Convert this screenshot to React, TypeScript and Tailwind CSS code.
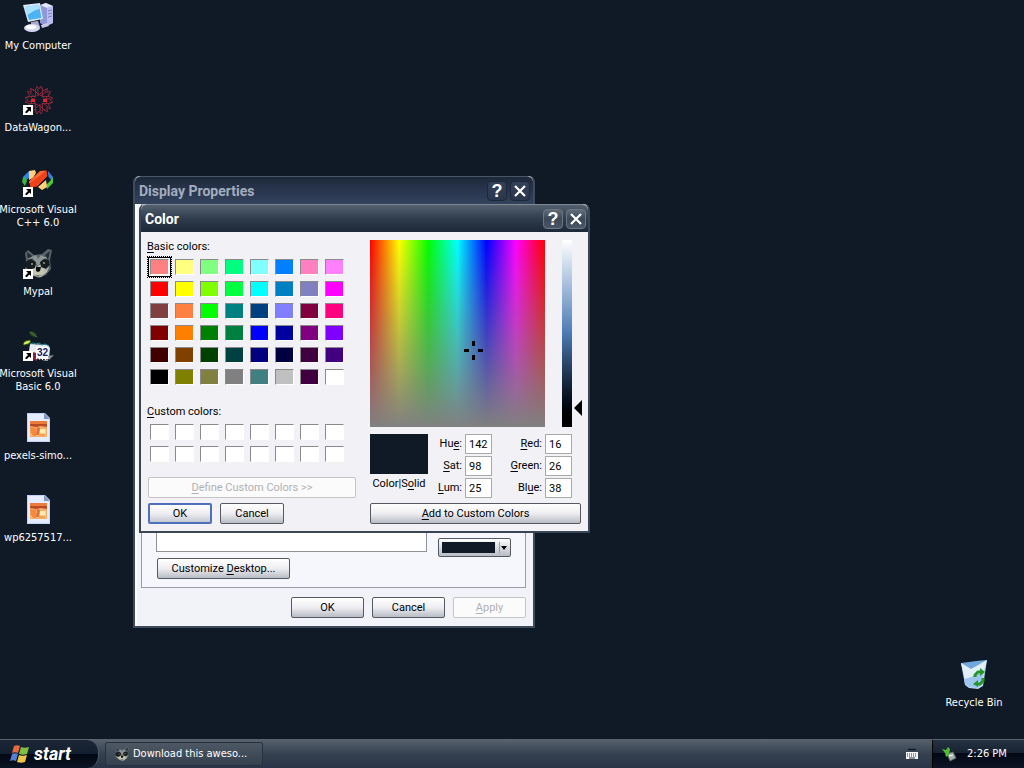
import { useState } from "react";
import type { ReactNode } from "react";

const BASIC_COLORS = [
  "#ff8080", "#ffff80", "#80ff80", "#00ff80", "#80ffff", "#0080ff", "#ff80c0", "#ff80ff",
  "#ff0000", "#ffff00", "#80ff00", "#00ff40", "#00ffff", "#0080c0", "#8080c0", "#ff00ff",
  "#804040", "#ff8040", "#00ff00", "#008080", "#004080", "#8080ff", "#800040", "#ff0080",
  "#800000", "#ff8000", "#008000", "#008040", "#0000ff", "#0000a0", "#800080", "#8000ff",
  "#400000", "#804000", "#004000", "#004040", "#000080", "#000040", "#400040", "#400080",
  "#000000", "#808000", "#808040", "#808080", "#408080", "#c0c0c0", "#400040", "#ffffff",
];
const CUSTOM_COLORS = Array.from({ length: 16 }, () => "#ffffff");

const UI_FONT = "font-['Roboto','Liberation_Sans',sans-serif]";
const SHELL_FONT = "font-['DejaVu_Sans_Condensed','DejaVu_Sans',sans-serif]";

function Shortcut() {
  return (
    <g>
      <path d="M1 21h10v10H1z" fill="#fff" />
      <path d="M4 23h5v5l-1.700-1.500L5 29H3.500v-1.500L6 25z" fill="#000" />
    </g>
  );
}

function ComputerIcon() {
  return (
    <svg viewBox="0 0 32 32" className="size-8">
      <path d="M18 4l5-3 8 3v17l-8 3-5-3z" fill="#8f97d4" />
      <path d="M18 3l6-2 7 3-6 2z" fill="#e4e8fb" />
      <path d="M25 6l6-2v17l-6 3z" fill="#b8bcee" />
      <path d="M26 9l4-1M26 12l4-1M26 15l4-1" stroke="#7a80c4" />
      <path d="M1 3l17-2 3 16-15 3z" fill="#dbe8fa" />
      <path d="M3 5l14-2 2.500 13L7 18z" fill="#4cb3f5" />
      <path d="M3 5l14-2 .5 4C12 8 9 11 5.500 13z" fill="#a9e2ff" />
      <path d="M9 20l7-1 2 6H9z" fill="#a5aacd" />
      <ellipse cx="10" cy="26" rx="8" ry="4" fill="#d5d8f2" />
      <ellipse cx="9" cy="25" rx="5" ry="2" fill="#fff" />
      <path d="M19 23l6-2 2 3-7 2z" fill="#c8c9e8" />
    </svg>
  );
}

function WagonIcon() {
  return (
    <svg viewBox="0 0 32 32" className="size-8">
      <g fill="none" stroke="#86283a">
        {[0, 45, 90, 135, 180, 225, 270, 315].map((deg) => (
          <g key={deg} transform={`rotate(${deg} 17 16)`}>
            <path d="M17 11l-4-4 2-5 2 3 2-3 2 5z" />
            <path d="M13 7l-3-2M20 12l4-5" />
          </g>
        ))}
      </g>
      <circle cx="17" cy="16" r="5" fill="none" stroke="#a32b40" strokeDasharray="2 1" />
      <path d="M9 15h4v3H9zM21 15h4v3h-4z" fill="#e0243c" />
      <Shortcut />
    </svg>
  );
}

function VisualCIcon() {
  return (
    <svg viewBox="0 0 32 32" className="size-8">
      <path d="M7 5l-6 6 2 4 5-4z" fill="#2f86e8" />
      <path d="M1 11l-1 5 3 4 2-5-2-4z" fill="#36b53c" />
      <path d="M26 5l5 6-1 4-4-5z" fill="#2f86e8" />
      <path d="M31 11v6l-6 6-1-4 5-5z" fill="#4dc63c" />
      <path d="M7 5l6-1 1 3-3 5-4 2z" fill="#ffd27a" />
      <path d="M24 14l1 7-5 3-4-3z" fill="#ffd27a" />
      <path d="M18 5l7-1 1 6-11 11-7 1-1-6z" fill="#ee4318" stroke="#2a0c08" />
      <path d="M18 5l6-.5-6 5-11 8v-2z" fill="#fc6a3a" />
      <Shortcut />
    </svg>
  );
}

function RaccoonFace() {
  return (
    <g>
      <path d="M3 5l3-3 6 5 8-1 6-5 4 1-2 10 1 9-5 6-7 3-8-3-6-7 1-8z" fill="#59636a" />
      <path d="M5 4l5 4-4 5zM28 3l-5 4 3 5z" fill="#222b32" />
      <path d="M10 9l4-2 2 4 3-4 4 3-4 4-3 4-3-4z" fill="#8c9596" />
      <path d="M3 17l7-1 5 3 4-3 9-1-3 9-6 5-7-1-6-5z" fill="#c3c5b0" />
      <path d="M3 14l6-3 5 3-1 6-6 2-4-3zM27 12l-5-1-4 3 1 5 5 2 4-4z" fill="#151d22" />
      <circle cx="10" cy="16" r="1" fill="#a99e62" />
      <circle cx="22" cy="15" r="1" fill="#a99e62" />
      <path d="M14 19h5l-1 4-2 1-2-1z" fill="#080d10" />
      <path d="M6 11l5-2M20 9l5 1M3 21l6 2M22 23l5-3M12 27l4 1 4-1" stroke="#9da5a1" />
    </g>
  );
}

function RaccoonIcon() {
  return (
    <svg viewBox="0 0 32 32" className="size-8">
      <RaccoonFace />
      <Shortcut />
    </svg>
  );
}

function VisualBasicIcon() {
  return (
    <svg viewBox="0 0 32 32" className="size-8">
      <path d="M7 2c4-2 7 0 8 5-4 0-7-1-8-5z" fill="#2a4a22" />
      <path d="M8 2l7 5" stroke="#4d7838" />
      <path d="M1 15c0-4 5-6 8-4-1 3-4 4-8 4z" fill="#b5d832" stroke="#304010" />
      <path d="M2 14l6-3" stroke="#eef49a" />
      <path d="M8 14l18 1 2 3-1 11-17-1-3-7z" fill="#e7edf3" />
      <path d="M8 14l3-1 3 1 3-1 3 2 3-1 4 2" stroke="#278b9c" fill="none" />
      <path d="M10 22l5 1v8l-5-2z" fill="#8b2240" />
      <path d="M26 26l6-1-5 5z" fill="#8c9094" />
      <path d="M14 17h12v14l-12-2z" fill="#fff" />
      <text x="15" y="26" className="font-['Liberation_Sans',sans-serif] text-[10px] font-bold" fill="#172060">32</text>
      <path d="M15 29l11 1" stroke="#101010" strokeDasharray="2 1" />
      <Shortcut />
    </svg>
  );
}

function PictureFileIcon() {
  return (
    <svg viewBox="0 0 32 32" className="size-8">
      <path d="M5 1h18l5 5v24H5z" fill="#c3d1fa" />
      <path d="M6 2h16v5h5v22H6z" fill="#e6ecff" />
      <path d="M22 1v6h6z" fill="#8297c0" />
      <path d="M8 9h17v16H8z" fill="#f6ad68" />
      <path d="M9 17h15v7H9z" fill="#fbc983" />
      <path d="M8 9h17v3H8z" fill="#ee7c3a" />
      <path d="M8 12h17v3l-6-1-5 1-6-1z" fill="#b94a26" />
      <path d="M8 15l6 1v8h-3l-2-3z" fill="#f58a3c" />
      <path d="M15 15l3 1-1 7h-3z" fill="#e26f38" />
      <path d="M18 17h5v4h-5z" fill="#ffedb8" />
      <path d="M17 22h6v2h-6z" fill="#f7a04c" />
    </svg>
  );
}

function RecycleBinIcon() {
  return (
    <svg viewBox="0 0 32 32" className="size-8">
      <path d="M3 4l10 2L29 1l-4 26-5 3-9-1-4-3z" fill="#b9d6ef" />
      <path d="M3 4l8-1 7-1 11-1-4 6-12 4z" fill="#6fa8dd" />
      <path d="M3 4l10 6 16-9-4 13-8 2-10 5z" fill="#e2eff9" />
      <path d="M6 20l8-2 11-5-2 13-4 3-8-1-4-3z" fill="#9cc6ee" />
      <g fill="none" stroke="#23952b" strokeWidth="3">
        <path d="M17 18v-2l3-3h3" />
        <path d="M25 19v3l-3 3h-3" />
      </g>
      <path d="M22 9l5 4-5 4zM20 21v7l-5-3z" fill="#23952b" />
    </svg>
  );
}

function FlagIcon() {
  return (
    <svg viewBox="0 0 20 20" className="size-5">
      <path d="M4 2c2-1 4-1 6 0L8 9C6 8 4 8 2 9z" fill="#e8693f" />
      <path d="M11 3c2 1 5 1 8 0l-2 7c-3 1-5 1-8 0z" fill="#7fc043" />
      <path d="M2 10c2-1 4-1 6 0l-2 7c-2-1-4-1-6 0z" fill="#5580d8" />
      <path d="M9 11c2 1 5 1 8 0l-2 7c-3 1-5 1-8 0z" fill="#edc544" />
    </svg>
  );
}

const DESKTOP_ICONS = [
  { label: "My Computer", icon: <ComputerIcon /> },
  { label: "DataWagon...", icon: <WagonIcon /> },
  { label: "Microsoft Visual C++ 6.0", icon: <VisualCIcon /> },
  { label: "Mypal", icon: <RaccoonIcon /> },
  { label: "Microsoft Visual Basic 6.0", icon: <VisualBasicIcon /> },
  { label: "pexels-simo...", icon: <PictureFileIcon /> },
  { label: "wp6257517...", icon: <PictureFileIcon /> },
];

function DesktopIcon({ label, icon }: { label: string; icon: ReactNode }) {
  return (
    <button className="flex h-[82px] w-20 flex-col items-center gap-[5px] pt-0.5 text-[11px] leading-[13px] text-white">
      {icon}
      <span>{label}</span>
    </button>
  );
}

// Caption with one underlined access key
function Key({ text, at = 0 }: { text: string; at?: number }) {
  return (
    <span className="whitespace-pre">
      {text.slice(0, at)}
      <span className="underline underline-offset-2">{text[at]}</span>
      {text.slice(at + 1)}
    </span>
  );
}

function PushButton({
  children,
  className = "",
  isDefault = false,
  disabled = false,
}: {
  children: ReactNode;
  className?: string;
  isDefault?: boolean;
  disabled?: boolean;
}) {
  const look = disabled
    ? "border border-[#c5c5c8] bg-[#fbfbfc] text-[#b0b0b3]"
    : isDefault
      ? "border-2 border-[#4d6fbc] bg-linear-to-b from-white via-[#eeeef2] to-[#c6c9d2]"
      : "border border-[#555a62] bg-linear-to-b from-white via-[#eeeef2] to-[#b9bcc4]";
  return (
    <button
      disabled={disabled}
      className={`flex h-[21px] items-center justify-center rounded-xs pt-0.5 ${look} ${className}`}
    >
      {children}
    </button>
  );
}

function CaptionButton({ label, active, children }: { label: string; active: boolean; children: ReactNode }) {
  return (
    <button
      aria-label={label}
      className={`flex size-5 items-center justify-center rounded-sm border text-white ${
        active
          ? "border-[#6b7683] bg-linear-to-b from-[#606c79] via-[#3c4857] to-[#4a5665]"
          : "border-[#1d273a] bg-linear-to-b from-[#334057] to-[#2a364e]"
      }`}
    >
      {children}
    </button>
  );
}

function TitleBar({ title, active }: { title: string; active: boolean }) {
  return (
    <div
      className={`flex h-7 shrink-0 items-center gap-[3px] rounded-t-md border-t pl-1 ${
        active
          ? "border-[#7b8793] bg-linear-to-b from-[#55616f] via-[#303d4c] to-[#1c2838] pr-0.5"
          : "border-[#4a5668] bg-linear-to-b from-[#1d293a] via-[#28354d] to-[#35425c] pr-[3px]"
      }`}
    >
      <h2 className={`flex-1 text-sm font-bold ${active ? "text-white" : "text-[#a3adbd]"}`}>{title}</h2>
      <CaptionButton label="Help" active={active}>
        <span className="font-['Liberation_Sans',sans-serif] text-lg leading-none font-bold">?</span>
      </CaptionButton>
      <CaptionButton label="Close" active={active}>
        <svg viewBox="0 0 12 12" className="size-3" stroke="currentColor" strokeWidth="2.200">
          <path d="M1 1l10 10M11 1L1 11" />
        </svg>
      </CaptionButton>
    </div>
  );
}

function SwatchGrid({
  colors,
  selected,
  onSelect,
}: {
  colors: string[];
  selected?: number;
  onSelect?: (i: number) => void;
}) {
  return (
    <div className="grid grid-cols-[repeat(8,25px)]">
      {colors.map((color, i) => (
        <button
          key={i}
          aria-label={`Color ${i + 1}`}
          onClick={() => onSelect?.(i)}
          className={`flex h-[22px] items-center justify-center ${
            i === selected ? "border border-dotted border-black" : ""
          }`}
        >
          <span className={i === selected ? "border border-black p-px" : ""}>
            <span
              className="block h-4 w-[19px] border border-t-[#8a8a8c] border-r-white border-b-white border-l-[#8a8a8c]"
              style={{ backgroundColor: color }}
            />
          </span>
        </button>
      ))}
    </div>
  );
}

function NumberField({ id, label, at = 0, value }: { id: string; label: string; at?: number; value: string }) {
  return (
    <div className="flex items-center justify-end gap-[3px]">
      <label htmlFor={id}>
        <Key text={label} at={at} />
      </label>
      <input
        id={id}
        defaultValue={value}
        className="h-5 w-[27px] border border-[#a7aaa8] bg-white pl-[3px] outline-none"
      />
    </div>
  );
}

function ColorDialog() {
  const [selected, setSelected] = useState(0);
  const [lum, setLum] = useState(25);

  return (
    <section
      aria-label="Color"
      className="absolute top-[204px] left-[139px] w-[451px] rounded-t-md border-x-2 border-b-2 border-[#3b4654] bg-[#f2f2f6]"
    >
      <TitleBar title="Color" active />
      <div className="flex justify-between pt-[7px] pr-[7px] pb-[7px] pl-[6px]">
        <div className="flex w-[209px] flex-col">
          <div className="mb-px leading-4">
            <Key text="Basic colors:" />
          </div>
          <SwatchGrid colors={BASIC_COLORS} selected={selected} onSelect={setSelected} />
          <div className="mt-4 mb-px leading-4">
            <Key text="Custom colors:" />
          </div>
          <SwatchGrid colors={CUSTOM_COLORS} />
          <PushButton disabled className="mt-3 ml-px">
            <Key text="Define Custom Colors >>" />
          </PushButton>
          <div className="mt-[5px] ml-px flex gap-2">
            <PushButton isDefault className="w-16">OK</PushButton>
            <PushButton className="w-16">Cancel</PushButton>
          </div>
        </div>

        <div className="flex w-[211px] flex-col">
          <div className="mt-px flex">
            <div className="relative h-[187px] w-[175px] bg-[linear-gradient(to_right,#f00,#ff0,#0f0,#0ff,#00f,#f0f,#f00)]">
              <div className="h-full bg-linear-to-b from-[#80808000] to-[#808080]" />
              <svg viewBox="0 0 19 19" className="absolute top-[101px] left-[94px] size-[19px]">
                <path d="M8 0h3v5H8zM8 14h3v5H8zM0 8h5v3H0zM14 8h5v3h-5z" />
              </svg>
            </div>
            <div className="relative ml-[17px] w-[10px] bg-linear-to-b from-white via-[#4b7bb4] to-black">
              <input
                type="range"
                aria-label="Luminosity"
                min={0}
                max={240}
                value={lum}
                onChange={(e) => setLum(Number(e.target.value))}
                className="absolute inset-0 h-full w-5 opacity-0 [direction:rtl] [writing-mode:vertical-lr]"
              />
              <svg
                viewBox="0 0 8 16"
                className="pointer-events-none absolute left-3 h-4 w-2 translate-y-1/2"
                style={{ bottom: `${(lum / 240) * 100}%` }}
              >
                <path d="M8 0v16L0 8z" />
              </svg>
            </div>
          </div>

          <div className="mt-[7px] flex">
            <div className="flex w-[58px] flex-col items-center">
              <div className="h-10 w-full bg-[#101a26]" />
              <div className="mt-0.5 leading-4">
                <Key text="Color|Solid" at={7} />
              </div>
            </div>
            <div className="flex w-16 flex-col gap-0.5">
              <NumberField id="hue" label="Hue:" at={2} value="142" />
              <NumberField id="sat" label="Sat:" value="98" />
              <NumberField id="lum" label="Lum:" value="25" />
            </div>
            <div className="flex w-20 flex-col gap-0.5">
              <NumberField id="red" label="Red:" value="16" />
              <NumberField id="green" label="Green:" value="26" />
              <NumberField id="blue" label="Blue:" at={2} value="38" />
            </div>
          </div>
          <PushButton className="mt-auto">
            <Key text="Add to Custom Colors" />
          </PushButton>
        </div>
      </div>
    </section>
  );
}

function DisplayProperties() {
  return (
    <section
      aria-label="Display Properties"
      className="absolute top-[176px] left-[133px] flex h-[452px] w-[402px] flex-col rounded-t-md border-x-2 border-b-2 border-[#3f4a5a] bg-[#f2f3f8]"
    >
      <TitleBar title="Display Properties" active={false} />
      <div className="flex flex-1 flex-col border-l-2 border-white pr-[7px] pb-2 pl-1">
        <div className="flex flex-1 flex-col border border-t-0 border-[#9a9da4] bg-[#f6f7fc] px-3.5 pb-2">
          <div className="flex flex-1 gap-[11px]">
            <div className="mb-1.5 w-[272px] border border-t-0 border-[#8f9298] bg-white" />
            <div className="relative mb-px self-end">
              <select
                aria-label="Color"
                className="block h-[19px] w-[73px] appearance-none rounded-xs border border-[#555a62] bg-linear-to-b from-white to-[#b9bcc4]"
              />
              <div className="pointer-events-none absolute inset-y-1 right-1 left-1 flex items-center">
                <span className="h-[11px] w-[53px] bg-[#101a26]" />
                <span className="ml-1 h-full border-l border-[#9a9da4]" />
                <svg viewBox="0 0 6 4" className="ml-px h-1 w-1.5">
                  <path d="M0 0h6L3 4z" />
                </svg>
              </div>
            </div>
          </div>
          <PushButton className="ml-px w-[133px]">
            <Key text="Customize Desktop..." at={10} />
          </PushButton>
        </div>
        <div className="mt-[9px] flex justify-end gap-2">
          <PushButton className="w-[73px]">OK</PushButton>
          <PushButton className="w-[73px]">Cancel</PushButton>
          <PushButton disabled className="w-[73px]">
            <Key text="Apply" />
          </PushButton>
        </div>
      </div>
    </section>
  );
}

function Taskbar() {
  return (
    <footer className="flex h-[29px] shrink-0 items-stretch border-t border-[#59636f] bg-linear-to-b from-[#56616e] via-[#35414f] to-[#2a3448] text-[11px] text-white">
      <button className="flex w-[99px] items-center gap-1 rounded-r-xl border-r border-[#4d5a69] bg-[linear-gradient(to_bottom,#1b2737,#131f30_50%,#020713_50%,#0a1424)] pl-[10px]">
        <FlagIcon />
        <span className="font-['Roboto','Liberation_Sans',sans-serif] text-lg leading-none font-bold italic">start</span>
      </button>
      <button className="my-0.5 ml-1.5 flex w-[158px] items-center gap-[3px] rounded-xs border border-[#263240] bg-linear-to-b from-[#4d5864] to-[#35414e] pl-2">
        <svg viewBox="0 0 32 32" className="size-4">
          <RaccoonFace />
        </svg>
        Download this aweso...
      </button>
      <div className="ml-auto flex items-center pr-3.5">
        <svg viewBox="0 0 12 12" className="size-3">
          <path d="M2 2l2-1 2 1 2-1 2 1" fill="none" stroke="#05080c" />
          <path d="M0 4h12v7H0z" fill="#f5f7f8" />
          <path d="M1 6h10M1 8h10" stroke="#28313c" strokeDasharray="1 1" />
          <path d="M3 10h6" stroke="#28313c" />
        </svg>
      </div>
      <div className="flex w-[92px] items-center gap-2.5 border-l border-black bg-[linear-gradient(to_bottom,#253241,#172333_45%,#020713_45%,#0c1625)] pl-2">
        <svg viewBox="0 0 16 16" className="size-4">
          <path d="M6 8l6-2 3 6-6 3z" fill="#a8b0b2" stroke="#59666a" />
          <path d="M8 10l4-1" stroke="#fff" />
          <path d="M1 3l4 1 2-3 2 2-1 6-3 2-1-4z" fill="#55b936" />
        </svg>
        <time>2:26 PM</time>
      </div>
    </footer>
  );
}

export default function App() {
  return (
    <div className={`flex h-screen w-full flex-col overflow-hidden bg-[#101a26] ${SHELL_FONT}`}>
      <main className="relative flex-1">
        <div className="-ml-0.5 flex w-20 flex-col">
          {DESKTOP_ICONS.map((item) => (
            <DesktopIcon key={item.label} {...item} />
          ))}
        </div>
        <div className="absolute right-2.5 bottom-0">
          <DesktopIcon label="Recycle Bin" icon={<RecycleBinIcon />} />
        </div>
        <div className={`text-[11px] text-black ${UI_FONT}`}>
          <DisplayProperties />
          <ColorDialog />
        </div>
      </main>
      <Taskbar />
    </div>
  );
}
